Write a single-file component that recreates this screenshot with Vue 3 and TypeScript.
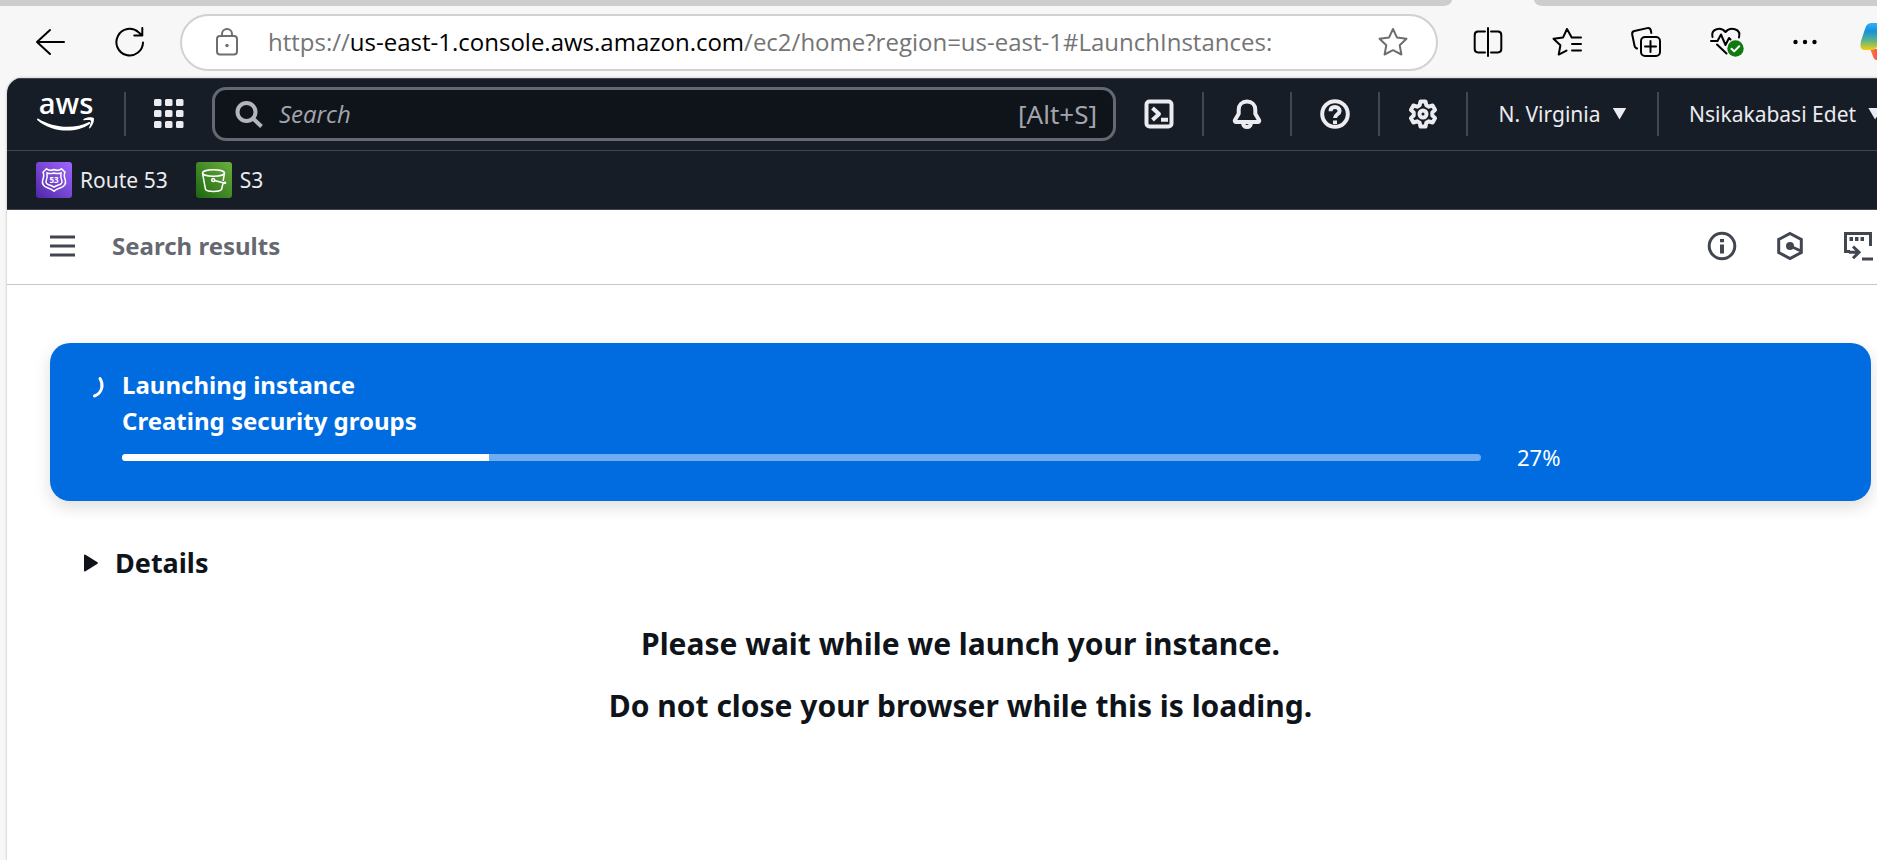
<script setup lang="ts">
import { ref } from 'vue'

const progress = ref<number>(27)
const query = ref<string>('')

const gridCells: number[] = [0, 11, 22]
</script>

<template>
  <div class="browser">
    <div class="tab-strip"><span class="tab-rest tab-left"></span><span class="tab-rest tab-right"></span></div>

    <div class="toolbar">
      <button class="tool back" aria-label="Back">
        <svg width="30" height="30" viewBox="0 0 30 30"><path d="M29 15H2M15 3 2 15l13 12" /></svg>
      </button>
      <button class="tool reload" aria-label="Refresh">
        <svg width="30" height="30" viewBox="0 0 30 30"><path d="M28 15.5A13.3 13.3 0 1 1 23.5 5.2L27.3 8.400M27.300 1v7.500h-8" /></svg>
      </button>
      <div class="address">
        <svg class="lock" width="24" height="28" viewBox="0 0 24 28">
          <rect x="2" y="8" width="20" height="18.500" rx="3" />
          <path d="M7 8V6a5 5 0 0 1 10 0V8" />
          <circle class="solid" cx="12" cy="17.500" r="1.700" />
        </svg>
        <div class="url" role="textbox" aria-label="Address bar" tabindex="0">https://<b>us-east-1.console.aws.amazon.com</b>/ec2/home?region=us-east-1#LaunchInstances:</div>
        <button class="star" aria-label="Add to favorites">
          <svg width="30" height="30" viewBox="0 0 30 30"><path d="M15 2 18.900 10.400 28.500 11.700 21.700 18.200 23.400 27.500 15 23.200 6.600 27.500 8.300 18.200 1.500 11.700 11.100 10.400z" /></svg>
        </button>
      </div>
      <div class="tools">
        <button class="tool" aria-label="Split screen">
          <svg width="32" height="30" viewBox="0 0 32 30"><path d="M13 4.500H6A3.500 3.500 0 0 0 2.700 8v14A3.500 3.500 0 0 0 6 25.500h7M19 4.500h7A3.500 3.500 0 0 1 29.300 8v14a3.500 3.500 0 0 1-3.300 3.500h-7M16 1v28" /></svg>
        </button>
        <button class="tool" aria-label="Favorites">
          <svg width="32" height="30" viewBox="0 0 32 30"><path d="M30 10.500h-9.300L16 2l-3.900 8.400-9.600 1.300 6.900 6.500-1.700 9.400 7.800-4M21 17h9M21 23.500h9" /></svg>
        </button>
        <button class="tool" aria-label="Collections">
          <svg width="32" height="32" viewBox="0 0 32 32"><path d="M7 22.500 6 22a3 3 0 0 1-1.400-2L2.200 8.500A3 3 0 0 1 4.500 5l12.700-2.900a3 3 0 0 1 3.600 2.200L21.300 7" /><rect x="11" y="11" width="19" height="19" rx="4" /><path d="M20.500 15v11M15 20.500h11" /></svg>
        </button>
        <button class="tool" aria-label="Browser essentials">
          <svg width="36" height="32" viewBox="0 0 36 32">
            <path d="M3.500 11C1.500 2.500 12 .5 16.500 6c4.500-5.500 16-3.500 13.500 5.500M2 15h6.500l3.500-6.500 4.500 10.500 3.500-7 1.500 1.500M8 18.500l9.500 9" />
            <circle cx="26.500" cy="22.500" r="8.200" class="badge" />
            <path class="tick" d="m22.500 22.700 2.700 2.700 5-5.200" />
          </svg>
        </button>
        <button class="tool" aria-label="Settings and more">
          <svg width="32" height="30" viewBox="0 0 32 30"><g class="solid"><circle cx="3.500" cy="15" r="2.200" /><circle cx="13" cy="15" r="2.200" /><circle cx="22.500" cy="15" r="2.200" /></g></svg>
        </button>
      </div>
      <button class="copilot" aria-label="Copilot">
        <svg width="44" height="38" viewBox="0 0 44 38">
          <defs>
            <linearGradient id="co-a" x1="0" y1="0" x2="0" y2="1"><stop offset="0" stop-color="#2fb4ee" /><stop offset=".3" stop-color="#168fe0" /><stop offset=".65" stop-color="#5bb586" /><stop offset="1" stop-color="#f5cf10" /></linearGradient>
            <linearGradient id="co-b" x1="0" y1="0" x2="1" y2="0"><stop offset="0" stop-color="#ff7a48" /><stop offset=".3" stop-color="#fb4a45" /><stop offset="1" stop-color="#e3489a" /></linearGradient>
          </defs>
          <path fill="url(#co-b)" stroke="none" d="M10 26h23l6-19c3 2 4 5 3 9l-3 14c-1 4-3 7-8 7H17c-4 0-4-5-7-11z" />
          <path fill="url(#co-a)" stroke="none" d="M11 0h19c4 0 5 3 6 7H23l-5 14c-1 4-3 6-6 6H5c-5 0-5-4-4-9l4-12c1-4 3-6 6-6z" />
        </svg>
      </button>
    </div>

    <div class="page">
      <header class="nav">
        <a class="logo" href="#" aria-label="AWS home">
          <svg width="60" height="40" viewBox="0 0 60 40">
            <text x="30" y="20" text-anchor="middle">aws</text>
            <g>
              <path d="M2 24.500C16.500 34 38.500 35.500 52.500 28.200c1.500-.700 2.500.800 1.200 1.800C39.500 40 15.500 38.500 1.500 26.200c-1-1 0-2.200.500-1.700z" />
              <path d="M47.500 25.300c3-2.500 9-2.500 10.200-1.200 1 1.600-.700 7.400-3.600 10-1 .700-1.300.200-1-.600.900-2 2.300-5.700 1.700-6.800-.700-1-4.500-.700-6.600-.400-1 .100-1.300-.500-.700-1z" />
            </g>
          </svg>
        </a>
        <span class="divider"></span>
        <button class="nav-btn services" aria-label="Services">
          <svg width="30" height="30" viewBox="0 0 30 30" class="solid">
            <template v-for="y in gridCells" :key="y">
              <rect v-for="x in gridCells" :key="x" :x="x" :y="y" width="7.500" height="7" rx="1.500" />
            </template>
          </svg>
        </button>
        <label class="search">
          <svg width="28" height="28" viewBox="0 0 28 28"><circle cx="11.500" cy="12" r="9" /><path d="m18 18.500 8.500 8" /></svg>
          <input v-model="query" type="text" placeholder="Search" aria-label="Search" />
          <span class="hint">[Alt+S]</span>
        </label>
        <div class="actions">
          <button class="nav-btn" aria-label="CloudShell">
            <svg width="30" height="30" viewBox="0 0 30 30"><rect x="2.500" y="2.500" width="25" height="25" rx="3" /><path d="m8.500 9 6.500 6-6.500 6M17 20.800h7" /></svg>
          </button>
          <button class="nav-btn" aria-label="Notifications">
            <svg width="30" height="30" viewBox="0 0 30 30"><path d="M15 2.500c-5 0-8.300 3.500-8.300 8v4.200L3 21c-.500.900-.200 1.900.900 1.900h22.200c1.100 0 1.400-1 .900-1.900l-3.700-6.300v-4.200c0-4.500-3.300-8-8.300-8zM11 24c.300 2.500 1.700 4 4 4s3.700-1.500 4-4" /></svg>
          </button>
          <button class="nav-btn" aria-label="Support">
            <svg width="30" height="30" viewBox="0 0 30 30"><circle cx="15" cy="15" r="12.800" /><path d="M10.500 12.200C10.500 9.300 12.500 8 15 8s4.600 1.500 4.600 4c0 3.300-4.600 3.300-4.600 7" /><path class="dot" d="M13 21.500h4v3.500h-4z" /></svg>
          </button>
          <button class="nav-btn" aria-label="Settings">
            <svg width="30" height="30" viewBox="0 0 30 30"><path d="M12.500 2.500h5l.8 3.700 2.600 1.500 3.700-1.200 2.500 4.400-2.800 2.600v3l2.800 2.600-2.500 4.400-3.700-1.200-2.600 1.500-.8 3.700h-5l-.8-3.700-2.600-1.500-3.700 1.200-2.500-4.400 2.800-2.600v-3l-2.800-2.600 2.500-4.400 3.700 1.200 2.600-1.500z" /><circle cx="15" cy="15" r="3.500" /></svg>
          </button>
        </div>
        <button class="menu region">N. Virginia <i class="caret"></i></button>
        <button class="menu account">Nsikakabasi Edet <i class="caret"></i></button>
      </header>

      <nav class="favorites">
        <a href="#">
          <svg width="36" height="36" viewBox="0 0 36 36">
            <defs><linearGradient id="r53" x1="0" y1="1" x2="1" y2="0"><stop offset="0" stop-color="#4d27a8" /><stop offset="1" stop-color="#a166ff" /></linearGradient></defs>
            <rect width="36" height="36" rx="3" fill="url(#r53)" />
            <g class="line">
              <path d="M18 7.500c-3 1.500-5 1.300-7.500-.8L7 10.200c1.500 3 .8 5-.3 7.800-1.200 4.300 1.300 6.500 4.800 7.700 2.600.9 5 2 6.500 3.500 1.500-1.500 3.900-2.600 6.500-3.500 3.500-1.200 6-3.400 4.800-7.700-1.100-2.800-1.800-4.800-.3-7.800l-3.500-3.500c-2.500 2.100-4.500 2.300-7.500.8z" />
              <path d="M18 11c-2.500.8-4.800.8-7 0 .5 3 .3 5-.8 7.500-.8 2.500.8 3.700 3.300 4.500 1.800.6 3.300 1.300 4.500 2.200 1.200-.9 2.700-1.600 4.500-2.200 2.500-.8 4.100-2 3.300-4.500-1.100-2.500-1.300-4.500-.8-7.500-2.200.8-4.500.8-7 0z" />
            </g>
            <text x="18" y="21" text-anchor="middle">53</text>
          </svg>
          Route 53
        </a>
        <a href="#">
          <svg width="36" height="36" viewBox="0 0 36 36">
            <defs><linearGradient id="s3" x1="0" y1="1" x2="1" y2="0"><stop offset="0" stop-color="#1b660f" /><stop offset="1" stop-color="#6cae3e" /></linearGradient></defs>
            <rect width="36" height="36" rx="3" fill="url(#s3)" />
            <g class="line">
              <ellipse cx="17.500" cy="11" rx="11" ry="3.200" />
              <path d="m6.500 11 3 16.500c2.500 2.600 13.500 2.600 16 0L27 21.500M28.500 11l-1.400 8M18.500 18.500l10.500 2.800" />
              <circle cx="17.200" cy="18" r="1.500" />
              <circle cx="29" cy="20.800" r=".6" />
            </g>
          </svg>
          S3
        </a>
      </nav>

      <div class="crumbs">
        <button class="burger" aria-label="Open navigation"><svg width="26" height="24" viewBox="0 0 26 24"><path d="M0 3h25M0 12h25M0 21h25" /></svg></button>
        <h1>Search results</h1>
        <div class="panel-icons">
          <button aria-label="Info"><svg width="30" height="30" viewBox="0 0 30 30"><circle cx="15" cy="15" r="12.800" /><path class="thick" d="M15 8v3.300M15 13.500v9" /></svg></button>
          <button aria-label="Tutorials"><svg width="30" height="30" viewBox="0 0 30 30"><path d="m15 2.500 11.300 6v13L15 27.500l-11.300-6v-13zM15 15l11 5" /><circle class="solid" cx="15" cy="15" r="4" /></svg></button>
          <button aria-label="Console to code"><svg width="30" height="30" viewBox="0 0 30 30"><path d="M7 20.500H2.500v-18h25V15M10 15.500l6 5.700-6 6M15.500 21.200H6M19 28h11" /><path class="dots" d="M6.500 8h3.500M12 8h3.500M17.500 8H21" /></svg></button>
        </div>
      </div>

      <main>
        <section class="flash" role="status">
          <svg class="spinner" width="24" height="24" viewBox="0 0 24 24"><path d="M17 2.500C20.500 8 20 16.500 11.500 20" /></svg>
          <div class="flash-body">
            <strong id="launch-title">Launching instance</strong>
            <strong>Creating security groups</strong>
            <div class="bar-row">
              <progress :value="progress" max="100" aria-labelledby="launch-title"></progress>
              <span>{{ progress }}%</span>
            </div>
          </div>
        </section>

        <details>
          <summary><svg width="16" height="20" viewBox="0 0 16 20"><path d="M1 2.500v15q0 1.500 1.500.8l12-7.500q1-.8 0-1.600l-12-7.500Q1 1 1 2.500z" /></svg>Details</summary>
        </details>

        <div class="wait">
          <p>Please wait while we launch your instance.</p>
          <p>Do not close your browser while this is loading.</p>
        </div>
      </main>
    </div>
  </div>
</template>

<style>
html, body { background: #f7f7f7; }
body { margin: 0; }
</style>

<style scoped>
.browser {
  min-height: 100vh;
  display: flex;
  flex-direction: column;
  overflow: hidden;
  background: #f7f7f7;
  font-family: "Noto Sans", "Open Sans", sans-serif;
  color: #0f141a;
}
* { box-sizing: border-box; }
button { border: 0; padding: 0; background: none; font: inherit; color: inherit; cursor: pointer; display: flex; align-items: center; justify-content: center; }
a { color: inherit; text-decoration: none; }
svg { display: block; flex: none; fill: none; stroke: currentColor; }

.tab-strip { display: flex; justify-content: space-between; height: 6px; }
.tab-rest { background: #cdcdcd; }
.tab-left { flex: 1; border-bottom-right-radius: 12px 8px; }
.tab-right { width: 343px; margin-left: 82px; border-bottom-left-radius: 12px 8px; }

.toolbar { display: flex; align-items: center; height: 72px; padding-left: 35px; color: #000; overflow: hidden; }
.toolbar svg { stroke-width: 2; stroke-linejoin: round; stroke-linecap: round; }
.toolbar .solid { fill: currentColor; stroke: none; }
.toolbar .badge { fill: #0f7b0f; stroke: none; }
.toolbar .tick { stroke: #fff; }
.reload { margin-left: 50px; }
.address {
  flex: 1;
  min-width: 0;
  display: flex;
  align-items: center;
  height: 57px;
  margin-left: 35px;
  padding: 0 28px 0 33px;
  border: 2px solid #d1d1d1;
  border-radius: 29px;
  background: #fff;
  color: #6e6e6e;
}
.url { flex: 1; min-width: 0; margin-left: 29px; font-size: 24px; line-height: 32px; font-family: "Open Sans", "Noto Sans", sans-serif; white-space: nowrap; overflow: hidden; color: #757575; }
.url b { font-weight: 400; color: #000; }
.tools { display: flex; gap: 47px; margin-left: 34px; }
.copilot { width: 17px; margin-left: 36px; justify-content: flex-start; overflow: hidden; }

.page { flex: 1; display: flex; flex-direction: column; margin-left: 7px; border-top-left-radius: 15px; overflow: hidden; background: #fff; box-shadow: 0 0 2px 1px #d8d8d8; }

.nav { display: flex; align-items: center; height: 73px; padding: 0 0 2px 29px; background: #161d26; color: #ebebf0; border-top: 1px solid #424650; border-bottom: 1px solid #424650; overflow: hidden; }
.logo svg { fill: #fff; stroke: none; overflow: visible; }
.logo text { font: 600 29px "Open Sans", "Noto Sans", sans-serif; }
.divider { width: 2px; height: 44px; margin-left: 28px; background: #424650; }
.nav-btn svg { stroke-width: 4; stroke-linejoin: round; }
.nav-btn .solid { fill: currentColor; stroke: none; }
.nav-btn .dot { fill: currentColor; stroke: none; }
.services { margin: 0 28px; }
.search { flex: 1; min-width: 0; display: flex; align-items: center; height: 54px; padding: 0 16px 0 20px; border: 3px solid #656871; border-radius: 14px; background: #0f141a; color: #b4b4bb; }
.search svg { stroke-width: 4; }
.search input { flex: 1; min-width: 0; border: 0; outline: 0; padding: 0; margin-left: 16px; background: none; color: #ebebf0; font: 24px/32px "Open Sans", "Noto Sans", sans-serif; }
.search input::placeholder { color: #a4a4ad; font-style: italic; opacity: 1; }
.hint { font-size: 26px; line-height: 32px; color: #a4a4ad; }
.actions { display: flex; }
.actions .nav-btn { width: 88px; height: 44px; border-right: 2px solid #424650; }
.menu { height: 44px; font-size: 21px; line-height: 28px; white-space: nowrap; gap: 12px; }
.region { width: 191px; border-right: 2px solid #424650; }
.account { width: 218px; justify-content: flex-start; padding-left: 30px; overflow: hidden; }
.caret { flex: none; width: 14px; height: 12px; background: currentColor; clip-path: polygon(0 0, 100% 0, 50% 100%); }

.favorites { display: flex; gap: 28px; height: 59px; align-items: center; padding-left: 29px; background: #161d26; color: #ebebf0; border-bottom: 1px solid #424650; font-size: 21px; line-height: 28px; }
.favorites a { display: flex; align-items: center; gap: 8px; }
.favorites svg { stroke: none; }
.favorites .line { stroke: #fff; stroke-width: 1.500; }
.favorites text { fill: #fff; font: 700 8px "Open Sans", sans-serif; }

.crumbs { display: flex; align-items: center; height: 75px; padding: 0 4px 2px 43px; border-bottom: 1px solid #c6c6cd; color: #424650; }
.crumbs svg { stroke-width: 3; }
.crumbs .thick { stroke-width: 4; }
.crumbs .dots { stroke-width: 4; }
.crumbs .solid { fill: currentColor; stroke: none; }
h1 { flex: 1; margin: 0 0 0 36px; font-size: 24px; line-height: 32px; font-weight: 700; color: #656871; }
.panel-icons { display: flex; gap: 38px; }

main { flex: 1; padding: 58px 6px 0 43px; }
.flash { display: flex; min-height: 158px; padding: 24px 0 26px 33px; border-radius: 20px; background: #006ce0; color: #fff; box-shadow: 0 6px 16px 1px #0000001f; }
.spinner { margin: 9px 15px 0 0; stroke-width: 3; stroke-linecap: round; }
.flash-body { flex: 1; min-width: 0; display: flex; flex-direction: column; }
.flash strong { font-size: 24px; line-height: 36px; font-weight: 700; }
.bar-row { display: flex; align-items: center; gap: 36px; height: 36px; font-size: 22px; line-height: 28px; }
.bar-row span { width: 354px; }
progress { flex: 1; min-width: 0; height: 7px; border: 0; border-radius: 4px; overflow: hidden; appearance: none; background: #70adf0; }
progress::-webkit-progress-bar { background: #70adf0; }
progress::-webkit-progress-value { background: #fff; }

details { margin: 44px 0 0 33px; }
summary { display: flex; align-items: center; gap: 16px; list-style: none; font-size: 27px; line-height: 36px; font-weight: 700; cursor: pointer; }
summary svg { fill: currentColor; stroke: none; }
.wait { margin-top: 42px; text-align: center; font-size: 30px; line-height: 42px; font-weight: 700; }
.wait p { margin: 0 0 20px; }
</style>
